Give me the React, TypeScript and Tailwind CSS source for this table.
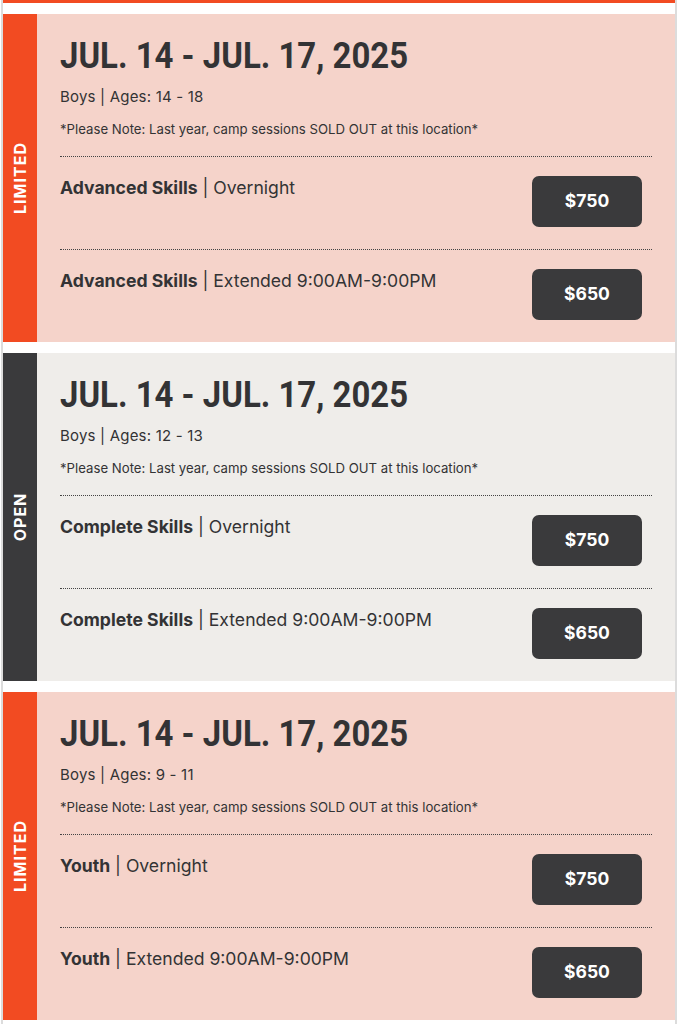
import React from "react";

type Row = { bold: string; rest: string; price: string };
type Session = {
  status: "LIMITED" | "OPEN";
  ages: string;
  rows: Row[];
};

const sessions: Session[] = [
  {
    status: "LIMITED",
    ages: "Boys | Ages: 14 - 18",
    rows: [
      { bold: "Advanced Skills", rest: "Overnight", price: "$750" },
      { bold: "Advanced Skills", rest: "Extended 9:00AM-9:00PM", price: "$650" },
    ],
  },
  {
    status: "OPEN",
    ages: "Boys | Ages: 12 - 13",
    rows: [
      { bold: "Complete Skills", rest: "Overnight", price: "$750" },
      { bold: "Complete Skills", rest: "Extended 9:00AM-9:00PM", price: "$650" },
    ],
  },
  {
    status: "LIMITED",
    ages: "Boys | Ages: 9 - 11",
    rows: [
      { bold: "Youth", rest: "Overnight", price: "$750" },
      { bold: "Youth", rest: "Extended 9:00AM-9:00PM", price: "$650" },
    ],
  },
];

function Card({ s }: { s: Session }) {
  const limited = s.status === "LIMITED";
  return (
    <div className={`flex ${limited ? "bg-[#f5d3ca]" : "bg-[#efedea]"}`}>
      <div
        className={`w-[34px] shrink-0 flex items-center justify-center ${
          limited ? "bg-[#f24b22]" : "bg-[#3a3a3c]"
        }`}
      >
        <span className="-rotate-90 whitespace-nowrap text-white font-bold text-[16px] tracking-[1px] font-['Inter',sans-serif]">
          {s.status}
        </span>
      </div>
      <div className="flex-1 pl-[23px] pr-[23px] pt-[20px] text-[#333335] font-['Inter',sans-serif]">
        <h2 className="font-['Roboto',sans-serif] font-bold text-[37px] leading-[44px] origin-left scale-x-[0.89] whitespace-nowrap">
          JUL. 14 - JUL. 17, 2025
        </h2>
        <div className="mt-[10px] text-[15px] leading-[18px] tracking-[0.2px]">{s.ages}</div>
        <div className="mt-[15px] text-[13.2px] leading-[16px]">
          *Please Note: Last year, camp sessions SOLD OUT at this location*
        </div>
        <div className="mt-[19px]">
          {s.rows.map((r, i) => (
            <div key={i} className="border-t border-dotted border-[#444] pt-[19px] pb-[22px] flex justify-between items-start">
              <div className="pt-[2px] text-[17.6px] leading-[20px]">
                <span className="font-bold">{r.bold}</span> | {r.rest}
              </div>
              <button className="mr-[10px] w-[110px] h-[51px] rounded-[7px] bg-[#3a3a3c] text-white font-bold text-[17.5px] font-['Inter',sans-serif]">
                {r.price}
              </button>
            </div>
          ))}
        </div>
      </div>
    </div>
  );
}

export default function App() {
  return (
    <div className="w-[683px] h-[1024px] bg-white overflow-hidden">
      <div className="ml-[1px] w-[676px] border-x-2 border-[#dcdcdc] min-h-[1024px]">
        <div className="border-t-[3px] border-[#f24b22] pt-[11px] flex flex-col gap-[11px]">
          {sessions.map((s, i) => (
            <Card key={i} s={s} />
          ))}
        </div>
      </div>
    </div>
  );
}
